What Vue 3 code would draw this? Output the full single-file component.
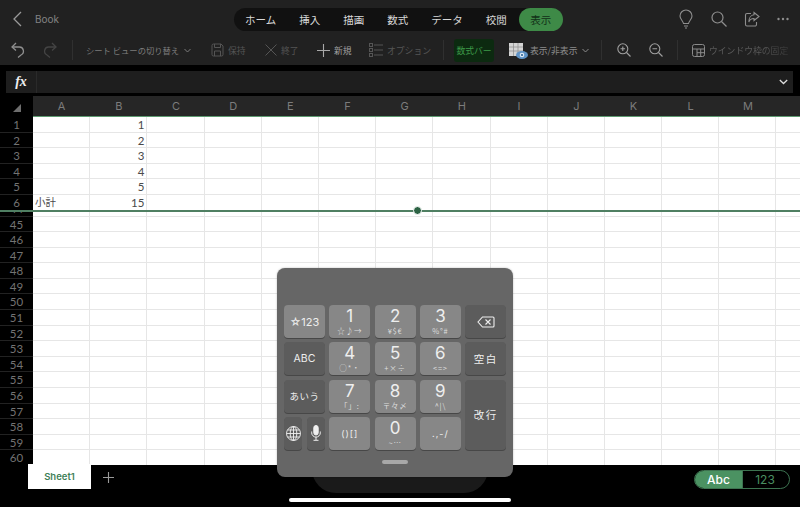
<script setup>
const tabs = ['ホーム', '挿入', '描画', '数式', 'データ', '校閲']
const cols = ['A','B','C','D','E','F','G','H','I','J','K','L','M']
const topRows = [
  { n: 1, b: '1' }, { n: 2, b: '2' }, { n: 3, b: '3' }, { n: 4, b: '4' }, { n: 5, b: '5' },
  { n: 6, a: '小計', b: '15' }
]
const bottomRows = Array.from({ length: 16 }, (_, i) => ({ n: 45 + i }))
const restCols = [...cols.slice(2), 'N']
const digits = [
  { m: '1', s: '☆♪→' }, { m: '2', s: '¥$€' }, { m: '3', s: '%°#' },
  { m: '4', s: '○*・' }, { m: '5', s: '+×÷' }, { m: '6', s: '<=>' },
  { m: '7', s: '「」:' }, { m: '8', s: '〒々〆' }, { m: '9', s: '^|\\' }
]
</script>

<template>
  <div class="app">
    <header class="top">
      <div class="title-row">
        <div class="back">
          <svg width="9" height="16" viewBox="0 0 9 16"><path d="M8 1 1 8l7 7" fill="none" stroke="#9a9a9a" stroke-width="1.3"/></svg>
          <span class="book">Book</span>
        </div>
        <nav class="tabs">
          <span v-for="t in tabs" :key="t" class="tab">{{ t }}</span>
          <span class="tab active">表示</span>
        </nav>
        <div class="actions">
          <svg width="16" height="20" viewBox="0 0 16 20" fill="none" stroke="#8e8e8e" stroke-width="1.1"><path d="M5.500 14.500C5 11.500 2 10.500 2 7a6 6 0 0 1 12 0c0 3.500-3 4.500-3.500 7.500z"/><path d="M6 17h4M7 19h2"/></svg>
          <svg width="16" height="16" viewBox="0 0 16 16" fill="none" stroke="#8e8e8e" stroke-width="1.2"><circle cx="6.500" cy="6.500" r="5.500"/><path d="m10.500 10.500 5 5"/></svg>
          <svg width="16" height="16" viewBox="0 0 16 16" fill="none" stroke="#8e8e8e" stroke-width="1.1"><path d="M7 2.500H3A1.500 1.500 0 0 0 1.500 4v9.500A1.500 1.500 0 0 0 3 15h8a1.500 1.500 0 0 0 1.500-1.500V11"/><path d="M10 1.500 15 5.500 10 9.500V7.500C7 7.500 5.500 9 4.800 11 4.800 7 7 4 10 3.800z"/></svg>
          <svg width="12" height="4" viewBox="0 0 12 4" fill="#8e8e8e"><circle cx="1.500" cy="2" r="1.200"/><circle cx="6" cy="2" r="1.200"/><circle cx="10.500" cy="2" r="1.200"/></svg>
        </div>
      </div>
      <div class="tool-row">
        <svg class="undo" width="14" height="16" viewBox="0 0 14 16" fill="none" stroke="#8f8f8f" stroke-width="1.300"><path d="M5 1 1 5l4 3.500"/><path d="M1 5h7.500a4.200 4.200 0 0 1 1.500 8L7 15.500"/></svg>
        <svg class="redo" width="14" height="16" viewBox="0 0 14 16" fill="none" stroke="#444" stroke-width="1.300"><path d="m9 1 4 4-4 3.500"/><path d="M13 5H5.500a4.200 4.200 0 0 0-1.500 8l3 2.500"/></svg>
        <i class="sep s1"></i>
        <span class="tool sheet-view">シート ビューの切り替え<svg class="chev" width="7" height="5" viewBox="0 0 7 5"><path d="m.5 1 3 3 3-3" fill="none" stroke="currentColor"/></svg></span>
        <span class="tool save"><svg width="13" height="14" viewBox="0 0 13 14" fill="none" stroke="#555" stroke-width="1"><path d="M1 2.500A1.500 1.500 0 0 1 2.500 1H10l2 2v8.500a1.500 1.500 0 0 1-1.500 1.500h-8A1.500 1.500 0 0 1 1 11.500z"/><path d="M3.500 1v3.500h6V1M3.500 13V8h6v5"/></svg>保持</span>
        <span class="tool close"><svg width="12" height="12" viewBox="0 0 12 12"><path d="m.5.5 11 11m0-11-11 11" stroke="#555" fill="none"/></svg>終了</span>
        <span class="tool new"><svg width="13" height="13" viewBox="0 0 13 13"><path d="M6.500 0v13M0 6.500h13" stroke="#a8a8a8" stroke-width="1.100"/></svg>新規</span>
        <span class="tool option"><svg width="14" height="14" viewBox="0 0 14 14" fill="none" stroke="#555"><rect x=".5" y=".5" width="3" height="3"/><rect x=".5" y="5.500" width="3" height="3"/><rect x=".5" y="10.500" width="3" height="3"/><path d="M5 2h9M5 7h9M5 12h9"/></svg>オプション</span>
        <i class="sep s2"></i>
        <span class="formula-toggle">数式バー</span>
        <span class="tool show">
          <svg width="19" height="18" viewBox="0 0 19 18"><rect x="0" y="1" width="14" height="13" fill="#d4d4d4"/><path d="M0 5h14M0 9h14M4.500 1v13M9 1v13" stroke="#8a8a8a" stroke-width=".7"/><ellipse cx="13" cy="13" rx="6" ry="4" fill="#5f93c6"/><circle cx="13" cy="13" r="2.300" fill="#dce9f5"/><circle cx="13" cy="13" r="1.100" fill="#2f6497"/></svg>
          表示/非表示<svg class="chev" width="7" height="5" viewBox="0 0 7 5"><path d="m.5 1 3 3 3-3" fill="none" stroke="currentColor"/></svg>
        </span>
        <i class="sep s3"></i>
        <svg class="zoom-in" width="14" height="14" viewBox="0 0 14 14" fill="none" stroke="#a0a0a0" stroke-width="1.100"><circle cx="5.800" cy="5.800" r="5"/><path d="m9.500 9.500 4 4M3.500 5.800h4.600M5.800 3.500v4.600"/></svg>
        <svg class="zoom-out" width="14" height="14" viewBox="0 0 14 14" fill="none" stroke="#a0a0a0" stroke-width="1.100"><circle cx="5.800" cy="5.800" r="5"/><path d="m9.500 9.500 4 4M3.500 5.800h4.600"/></svg>
        <i class="sep s4"></i>
        <span class="tool freeze"><svg width="13" height="13" viewBox="0 0 13 13" fill="none" stroke="#8a8a8a"><rect x=".5" y=".5" width="12" height="12" rx="2"/><path d="M.5 5h12M5 5v7.500M8.700 5v7.500M5 8.700h7.500"/></svg>ウインドウ枠の固定</span>
      </div>
    </header>

    <div class="formula-wrap">
      <div class="formula-bar">
        <span class="fx">fx</span>
        <svg class="fb-chev" width="9" height="6" viewBox="0 0 9 6"><path d="m.8 1 3.700 3.500L8.200 1" fill="none" stroke="#ddd" stroke-width="1.300"/></svg>
      </div>
    </div>

    <div class="sheet">
      <div class="col-head">
        <div class="corner"><i class="tri"></i></div>
        <span v-for="c in cols" :key="c" class="col-label">{{ c }}</span>
      </div>
      <div class="pane frozen">
        <div v-for="r in topRows" :key="r.n" class="row">
          <span class="row-no">{{ r.n }}</span>
          <span class="cell text">{{ r.a }}</span>
          <span class="cell num">{{ r.b }}</span>
          <span v-for="c in restCols" :key="c" class="cell"></span>
        </div>
      </div>
      <div class="freeze-line"><i class="handle-dot"></i></div>
      <div class="pane scrolled">
        <div class="row partial">
          <span class="row-no"><b class="clip-no">44</b></span>
          <span class="cell"></span><span class="cell"></span>
          <span v-for="c in restCols" :key="c" class="cell"></span>
        </div>
        <div v-for="r in bottomRows" :key="r.n" class="row">
          <span class="row-no">{{ r.n }}</span>
          <span class="cell"></span><span class="cell"></span>
          <span v-for="c in restCols" :key="c" class="cell"></span>
        </div>
      </div>
    </div>

    <footer class="bottom">
      <div class="sheet-tab">Sheet1</div>
      <svg class="add" width="11" height="11" viewBox="0 0 11 11"><path d="M5.500 0v11M0 5.500h11" stroke="#9a9a9a" stroke-width="1.100"/></svg>
      <div class="mode">
        <span class="mode-on">Abc</span>
        <span class="mode-off">123</span>
      </div>
    </footer>

    <div class="notch"></div>

    <div class="keyboard">
      <div class="keys">
        <button class="key light sym">☆123</button>
        <button v-for="d in digits.slice(0,3)" :key="d.m" class="key light digit"><b>{{ d.m }}</b><small>{{ d.s }}</small></button>
        <button class="key dark">
          <svg width="18" height="12" viewBox="0 0 18 12" fill="none" stroke="#eee" stroke-width="1.100"><path d="M5.500 1H16a1 1 0 0 1 1 1v8a1 1 0 0 1-1 1H5.500L1 6z"/><path d="m8.500 3.500 5 5m0-5-5 5"/></svg>
        </button>
        <button class="key dark abc">ABC</button>
        <button v-for="d in digits.slice(3,6)" :key="d.m" class="key light digit"><b>{{ d.m }}</b><small>{{ d.s }}</small></button>
        <button class="key dark jp">空白</button>
        <button class="key dark kana">あいう</button>
        <button v-for="d in digits.slice(6,9)" :key="d.m" class="key light digit"><b>{{ d.m }}</b><small>{{ d.s }}</small></button>
        <button class="key dark jp enter">改行</button>
        <div class="split">
          <button class="key dark">
            <svg width="15" height="15" viewBox="0 0 15 15" fill="none" stroke="#f0f0f0" stroke-width=".9"><circle cx="7.500" cy="7.500" r="7"/><ellipse cx="7.500" cy="7.500" rx="3.300" ry="7"/><path d="M7.500.5v14M.5 7.500h14M1.500 4h12M1.500 11h12"/></svg>
          </button>
          <button class="key dark">
            <svg width="10" height="16" viewBox="0 0 10 16" fill="none" stroke="#f0f0f0" stroke-width="1"><rect x="2.800" y=".5" width="4.400" height="9.500" rx="2.200" fill="#f0f0f0"/><path d="M.7 6.500v1.300a4.300 4.300 0 0 0 8.600 0V6.500M5 12v3M2.500 15.300h5"/></svg>
          </button>
        </div>
        <button class="key light punct">()[]</button>
        <button class="key light digit"><b>0</b><small>~…</small></button>
        <button class="key light punct">.,-/</button>
      </div>
      <div class="grabber"></div>
    </div>

    <div class="home-indicator"></div>
  </div>
</template>

<style scoped>
.app {
  position: relative;
  width: 800px;
  height: 507px;
  overflow: hidden;
  background: #000;
  display: flex;
  flex-direction: column;
  font-family: "Noto Sans CJK JP", "Liberation Sans", sans-serif;
}
.top { height: 65px; background: #212121; flex: none; }
.title-row { height: 35px; display: flex; align-items: center; position: relative; padding-top: 2px; box-sizing: border-box; }
.back { display: flex; align-items: center; width: 234px; padding-left: 13px; box-sizing: border-box; flex: none; }
.book { margin-left: 13px; font: 10px "Inter", "Liberation Sans", sans-serif; color: #838383; }
.tabs {
  width: 328px; height: 23px; flex: none; margin-top: 1px;
  background: #111; border-radius: 12px;
  display: flex; align-items: center; padding-left: 11px; box-sizing: border-box;
}
.tab { font-size: 10.500px; color: #d8d8d8; margin-right: 23px; line-height: 23px; white-space: nowrap; }
.tab.active {
  margin: 0 0 0 -11px; width: 44px; height: 23px; border-radius: 12px; background: #3e8a47;
  color: #123018; text-align: center; flex: none;
}
.actions { flex: 1; display: flex; align-items: center; justify-content: space-between; padding: 0 11px 0 116px; }
.tool-row { height: 30px; position: relative; display: flex; align-items: center; }
.undo { margin-left: 11px; flex: none; }
.redo { margin-left: 18px; flex: none; }
.sep { width: 1px; height: 20px; background: #303030; flex: none; }
.s1 { margin-left: 15px; }
.tool { display: inline-flex; align-items: center; font-size: 8.800px; color: #757575; white-space: nowrap; flex: none; }
.tool svg { flex: none; margin-right: 4px; }
.tool svg.chev { margin: 0 0 0 5px; }
.sheet-view { margin-left: 13px; width: 125px; color: #7d7d7d; font-size: 8.300px; }
.save { width: 54px; color: #555; }
.close { width: 52px; color: #555; }
.new { width: 52px; color: #a0a0a0; }
.option { width: 74px; color: #555; }
.s2 { margin-right: 10px; }
.formula-toggle {
  width: 40px; height: 23px; flex: none; margin-right: 15px;
  background: #0c2a10; border-radius: 3px; color: #3c9a48; font-size: 8.800px;
  line-height: 23px; text-align: center; white-space: nowrap;
}
.show { width: 92px; color: #8c8c8c; }
.show svg:first-child { margin-right: 2px; margin-top: 2px; }
.zoom-in { margin-left: 15px; flex: none; }
.zoom-out { margin-left: 18px; flex: none; }
.s4 { margin-left: 14px; margin-right: 14px; }
.freeze { color: #5a5a5a; -webkit-mask-image: linear-gradient(90deg, #000 70%, rgba(0,0,0,.35)); mask-image: linear-gradient(90deg, #000 70%, rgba(0,0,0,.35)); }
.formula-wrap { height: 31px; flex: none; padding: 6px 7px 3px 6px; box-sizing: border-box; }
.formula-bar {
  height: 22px; background: #1e1e1e; display: flex; align-items: center; justify-content: space-between;
  padding-right: 5px; box-sizing: border-box;
}
.fx {
  width: 30px; height: 22px; text-align: center; border-right: 1px solid #2a2a2a;
  font: italic 700 14px/21px "Liberation Serif", serif; color: #eee;
}
.sheet { height: 369px; flex: none; overflow: hidden; display: flex; flex-direction: column; }
.col-head { height: 21px; flex: none; display: flex; border-bottom: 1px solid #5d9a70; box-sizing: border-box; background: #262626; }
.corner { width: 33px; flex: none; background: #000; position: relative; margin-bottom: -1px; }
.tri {
  position: absolute; left: 13px; top: 8px; width: 0; height: 0;
  border-left: 8px solid transparent; border-bottom: 8px solid #6e6e6e;
}
.col-label {
  width: 57.200px; flex: none; text-align: center; font: 11px/20px "Inter", "Liberation Sans", sans-serif; color: #7c7c7c;
}
.pane { background: #fff; overflow: hidden; flex: none; }
.frozen { height: 92.500px; }
.scrolled { flex: 1; }
.row { display: flex; height: 15.600px; box-sizing: border-box; }
.partial { height: 5px; overflow: hidden; }
.clip-no { display: block; font-weight: 400; margin-top: -11px; }
.row-no {
  width: 33px; flex: none; background: #000; color: #737373; text-align: center;
  font: 11.500px/15px "Lato", "Liberation Sans", sans-serif; border-bottom: 1px solid #222; box-sizing: border-box;
}
.cell {
  width: 57.200px; flex: none; box-sizing: border-box;
  border-right: 1px solid #e6e6e6; border-bottom: 1px solid #e6e6e6;
  color: #4a4a4a; font: 11.500px/15px "Lato", "Noto Sans CJK JP", sans-serif; white-space: nowrap;
}
.num { text-align: right; padding-right: 2px; }
.text { padding-left: 2px; font-size: 10.500px; }
.freeze-line { height: 2px; flex: none; background: #4f7f62; position: relative; }
.handle-dot {
  position: absolute; left: 412.500px; top: -3.500px; width: 9px; height: 9px; border-radius: 50%;
  background: #2d6344; border: 1px solid #fff; box-sizing: border-box;
}
.bottom { flex: 1; position: relative; display: flex; align-items: flex-start; background: #000; }
.sheet-tab {
  margin: -1px 0 0 28px; width: 63px; height: 25px; background: #fff; flex: none;
  color: #3f7f58; font: 600 9.500px/26px "Inter", "Liberation Sans", sans-serif; text-align: center;
}
.add { margin: 7px 0 0 12px; flex: none; }
.mode {
  margin: 5px 10px 0 auto; width: 96px; height: 19px; border-radius: 10px; flex: none;
  border: 1px solid #3d7350; box-sizing: border-box; display: flex; overflow: hidden;
  font: 12px/18px "Inter", "Liberation Sans", sans-serif;
}
.mode-on { width: 47px; background: #4b9262; color: #fff; text-align: center; font-weight: 500; }
.mode-off { flex: 1; color: #4a8f60; text-align: center; border-left: 1px solid #3d7350; padding-right: 2px; }
.notch {
  position: absolute; left: 312px; top: 460px; width: 176px; height: 33px; background: #1a1a1a;
  border-radius: 0 0 24px 24px;
}
.keyboard {
  position: absolute; left: 277px; top: 268px; width: 236px; height: 209px; box-sizing: border-box;
  background: #666; border-radius: 8px; padding: 37px 7px 0 7px;
  box-shadow: 0 0 2px rgba(0,0,0,.3);
}
.keys {
  display: grid; grid-template-columns: repeat(5, 41px); grid-auto-rows: 33px; column-gap: 4.300px; row-gap: 4.300px;
}
.key {
  border: 0; padding: 0; margin: 0; border-radius: 4px; color: #eee; font: 10.500px "Noto Sans CJK JP", sans-serif;
  box-shadow: 0 1px 0 rgba(0,0,0,.3); display: flex; align-items: center; justify-content: center; flex-direction: column;
  min-width: 0;
}
.light { background: #878787; }
.dark { background: #5c5c5c; }
.sym { font: 11px "Inter", "Noto Sans CJK JP", sans-serif; }
.abc { font: 10.500px "Inter", "Liberation Sans", sans-serif; }
.kana { font-size: 9.500px; letter-spacing: .5px; }
.jp { font-size: 10.500px; letter-spacing: 1.500px; }
.enter { grid-row: span 2; }
.digit b { font: 400 17px/17px "Inter", "Liberation Sans", sans-serif; }
.digit small { font-size: 7.500px; line-height: 9px; margin-top: 1px; color: #ddd; letter-spacing: .8px; white-space: nowrap; }
.punct { font: 9px "Inter", "Liberation Sans", sans-serif; letter-spacing: 1px; }
.split { display: flex; gap: 5px; }
.split .key { flex: 1; }
.grabber { width: 26px; height: 4px; border-radius: 2px; background: #a8a8a8; margin: 10.500px auto 0; }
.home-indicator {
  position: absolute; left: 289px; top: 498px; width: 222px; height: 4px; border-radius: 2px; background: #fff;
}
</style>

<style>
html, body { margin: 0; background: #000; overflow: hidden; }
</style>
